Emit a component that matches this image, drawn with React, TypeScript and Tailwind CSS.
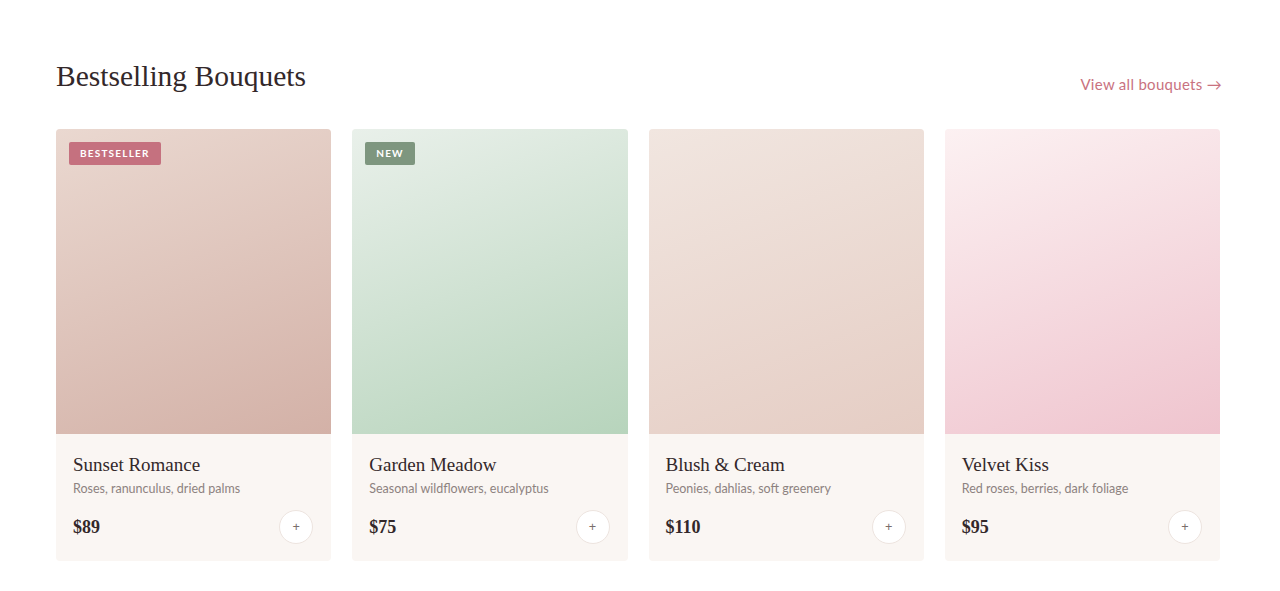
type Bouquet = {
  name: string;
  description: string;
  price: string;
  gradient: string;
  badge?: { label: string; className: string };
};

const bouquets: Bouquet[] = [
  {
    name: "Sunset Romance",
    description: "Roses, ranunculus, dried palms",
    price: "$89",
    gradient: "bg-[linear-gradient(160deg,#ead8d0,#d3b1a7)]",
    badge: { label: "BESTSELLER", className: "bg-[#c5717f]" },
  },
  {
    name: "Garden Meadow",
    description: "Seasonal wildflowers, eucalyptus",
    price: "$75",
    gradient: "bg-[linear-gradient(160deg,#e9f0ea,#b7d4bc)]",
    badge: { label: "NEW", className: "bg-[#7e967f]" },
  },
  {
    name: "Blush & Cream",
    description: "Peonies, dahlias, soft greenery",
    price: "$110",
    gradient: "bg-[linear-gradient(160deg,#f1e6e0,#e5cdc4)]",
  },
  {
    name: "Velvet Kiss",
    description: "Red roses, berries, dark foliage",
    price: "$95",
    gradient: "bg-[linear-gradient(160deg,#fcf1f2,#efc4ce)]",
  },
];

const serif = "font-['Liberation_Serif','Times_New_Roman',serif]";
const sans = "font-['Lato','Open_Sans',sans-serif]";

function BouquetCard({ bouquet }: { bouquet: Bouquet }) {
  return (
    <div className="overflow-hidden rounded-[4px] bg-[#faf6f3]">
      <div className={`relative h-[305px] ${bouquet.gradient}`}>
        {bouquet.badge && (
          <span
            className={`absolute left-[13px] top-[13px] rounded-[2px] px-[11px] py-[5px] text-[10px] font-bold leading-[13px] tracking-[0.12em] text-white ${sans} ${bouquet.badge.className}`}
          >
            {bouquet.badge.label}
          </span>
        )}
      </div>
      <div className="px-[17px] pb-[17px] pt-[19px]">
        <h3 className={`text-[19px] leading-[24px] text-[#33282a] ${serif}`}>
          {bouquet.name}
        </h3>
        <p className={`mt-[4px] text-[12.5px] leading-[16px] text-[#8d8280] ${sans}`}>
          {bouquet.description}
        </p>
        <div className="mt-[13px] flex items-center justify-between">
          <span className={`text-[18px] font-bold text-[#33282a] ${serif}`}>
            {bouquet.price}
          </span>
          <button className="mr-[1px] flex h-[34px] w-[34px] items-center justify-center rounded-full border border-[#ede4df] bg-white text-[13px] text-[#7a6e6b]">
            +
          </button>
        </div>
      </div>
    </div>
  );
}

export default function App() {
  return (
    <main className="min-h-screen bg-white pl-[56px] pr-[60px] pt-[56px]">
      <div className="flex items-end justify-between">
        <h2 className={`text-[29.5px] leading-[40px] text-[#33282a] ${serif}`}>
          Bestselling Bouquets
        </h2>
        <a
          href="#"
          className={`-mr-[2px] mb-[1px] text-[15px] tracking-[0.02em] text-[#c9727f] ${sans}`}
        >
          View all bouquets →
        </a>
      </div>

      <div className="mt-[33px] grid grid-cols-4 gap-[21px]">
        {bouquets.map((b) => (
          <BouquetCard key={b.name} bouquet={b} />
        ))}
      </div>
    </main>
  );
}
